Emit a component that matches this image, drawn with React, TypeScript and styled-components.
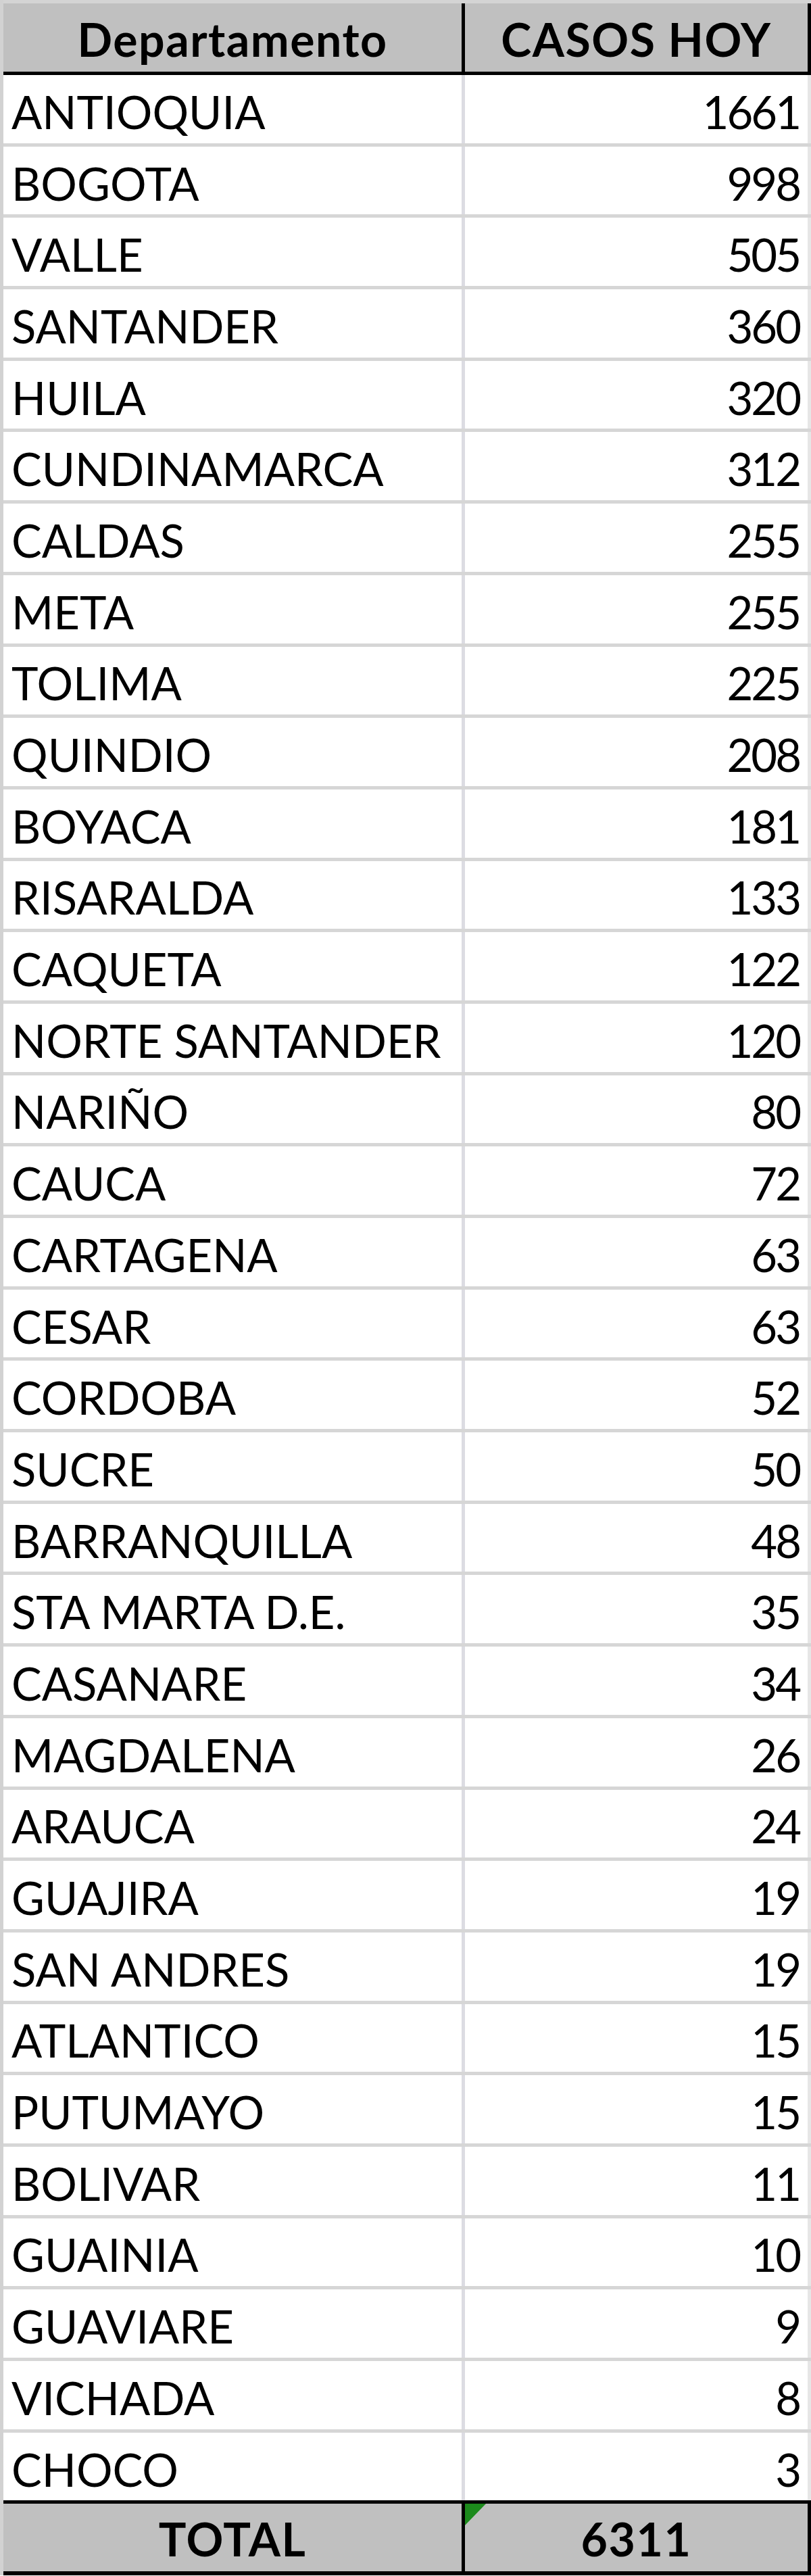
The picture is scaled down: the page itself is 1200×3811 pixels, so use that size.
import styled, { createGlobalStyle } from 'styled-components'

const GlobalStyle = createGlobalStyle`
  html, body {
    margin: 0;
    padding: 0;
    background: #fff;
  }

  body {
    font-family: Lato, 'Open Sans', 'Liberation Sans', sans-serif;
    color: #000;
  }
`

type Department = { name: string; cases: number }

const departments: Department[] = [
  { name: 'ANTIOQUIA', cases: 1661 },
  { name: 'BOGOTA', cases: 998 },
  { name: 'VALLE', cases: 505 },
  { name: 'SANTANDER', cases: 360 },
  { name: 'HUILA', cases: 320 },
  { name: 'CUNDINAMARCA', cases: 312 },
  { name: 'CALDAS', cases: 255 },
  { name: 'META', cases: 255 },
  { name: 'TOLIMA', cases: 225 },
  { name: 'QUINDIO', cases: 208 },
  { name: 'BOYACA', cases: 181 },
  { name: 'RISARALDA', cases: 133 },
  { name: 'CAQUETA', cases: 122 },
  { name: 'NORTE SANTANDER', cases: 120 },
  { name: 'NARIÑO', cases: 80 },
  { name: 'CAUCA', cases: 72 },
  { name: 'CARTAGENA', cases: 63 },
  { name: 'CESAR', cases: 63 },
  { name: 'CORDOBA', cases: 52 },
  { name: 'SUCRE', cases: 50 },
  { name: 'BARRANQUILLA', cases: 48 },
  { name: 'STA MARTA D.E.', cases: 35 },
  { name: 'CASANARE', cases: 34 },
  { name: 'MAGDALENA', cases: 26 },
  { name: 'ARAUCA', cases: 24 },
  { name: 'GUAJIRA', cases: 19 },
  { name: 'SAN ANDRES', cases: 19 },
  { name: 'ATLANTICO', cases: 15 },
  { name: 'PUTUMAYO', cases: 15 },
  { name: 'BOLIVAR', cases: 11 },
  { name: 'GUAINIA', cases: 10 },
  { name: 'GUAVIARE', cases: 9 },
  { name: 'VICHADA', cases: 8 },
  { name: 'CHOCO', cases: 3 },
]

const Sheet = styled.div`
  width: 1200px;
  box-sizing: border-box;
  border-left: 5px solid #d2d2d2;
  display: flex;
  flex-direction: column;
`

const Row = styled.div<{ $last?: boolean }>`
  display: grid;
  grid-template-columns: 683px 512px;
  height: 105.7px;
  box-sizing: border-box;
  border-bottom: 5px solid ${({ $last }) => ($last ? '#000' : '#d6d6d6')};
`

const HeadRow = styled.div`
  display: grid;
  grid-template-columns: 683px 512px;
  height: 111px;
  box-sizing: border-box;
  border-top: 5px solid #d4d4d4;
  border-bottom: 5px solid #000;
  background: #c0c0c0;
`

const TotalRow = styled(HeadRow)`
  height: 106px;
  border-top: none;
  border-bottom-width: 6px;
`

const Cell = styled.div<{ $align?: 'left' | 'right' | 'center'; $line: string }>`
  display: flex;
  align-items: center;
  justify-content: ${({ $align }) =>
    $align === 'right' ? 'flex-end' : $align === 'center' ? 'center' : 'flex-start'};
  padding: 8px 12px 0 12px;
  box-sizing: border-box;
  border-right: 5px solid ${({ $line }) => $line};
  font-size: 67px;
  line-height: 1;
  white-space: nowrap;
  position: relative;
`

const NumberCell = styled(Cell)`
  letter-spacing: -3px;
`

const HeadCell = styled(Cell)`
  font-weight: 700;
  font-size: 68px;
  letter-spacing: 1.5px;
  padding-top: 4px;
`

// excel's little "number stored as text" flag
const ErrorFlag = styled.span`
  position: absolute;
  left: 0;
  top: 0;
  width: 0;
  height: 0;
  border-top: 32px solid #1c8a1c;
  border-right: 31px solid transparent;
`

export default function App() {
  return (
    <>
      <GlobalStyle />
      <Sheet>
        <HeadRow>
          <HeadCell $align='center' $line='#000'>
            Departamento
          </HeadCell>
          <HeadCell $align='center' $line='#000'>
            CASOS HOY
          </HeadCell>
        </HeadRow>

        {departments.map(({ name, cases }, i) => (
          <Row key={name} $last={i === departments.length - 1}>
            <Cell $line='#dcdce2'>{name}</Cell>
            <NumberCell $align='right' $line='#e6e6e6'>
              {cases}
            </NumberCell>
          </Row>
        ))}

        <TotalRow>
          <HeadCell $align='center' $line='#000'>
            TOTAL
          </HeadCell>
          <HeadCell $align='center' $line='#000'>
            <ErrorFlag />
            6311
          </HeadCell>
        </TotalRow>
      </Sheet>
    </>
  )
}
